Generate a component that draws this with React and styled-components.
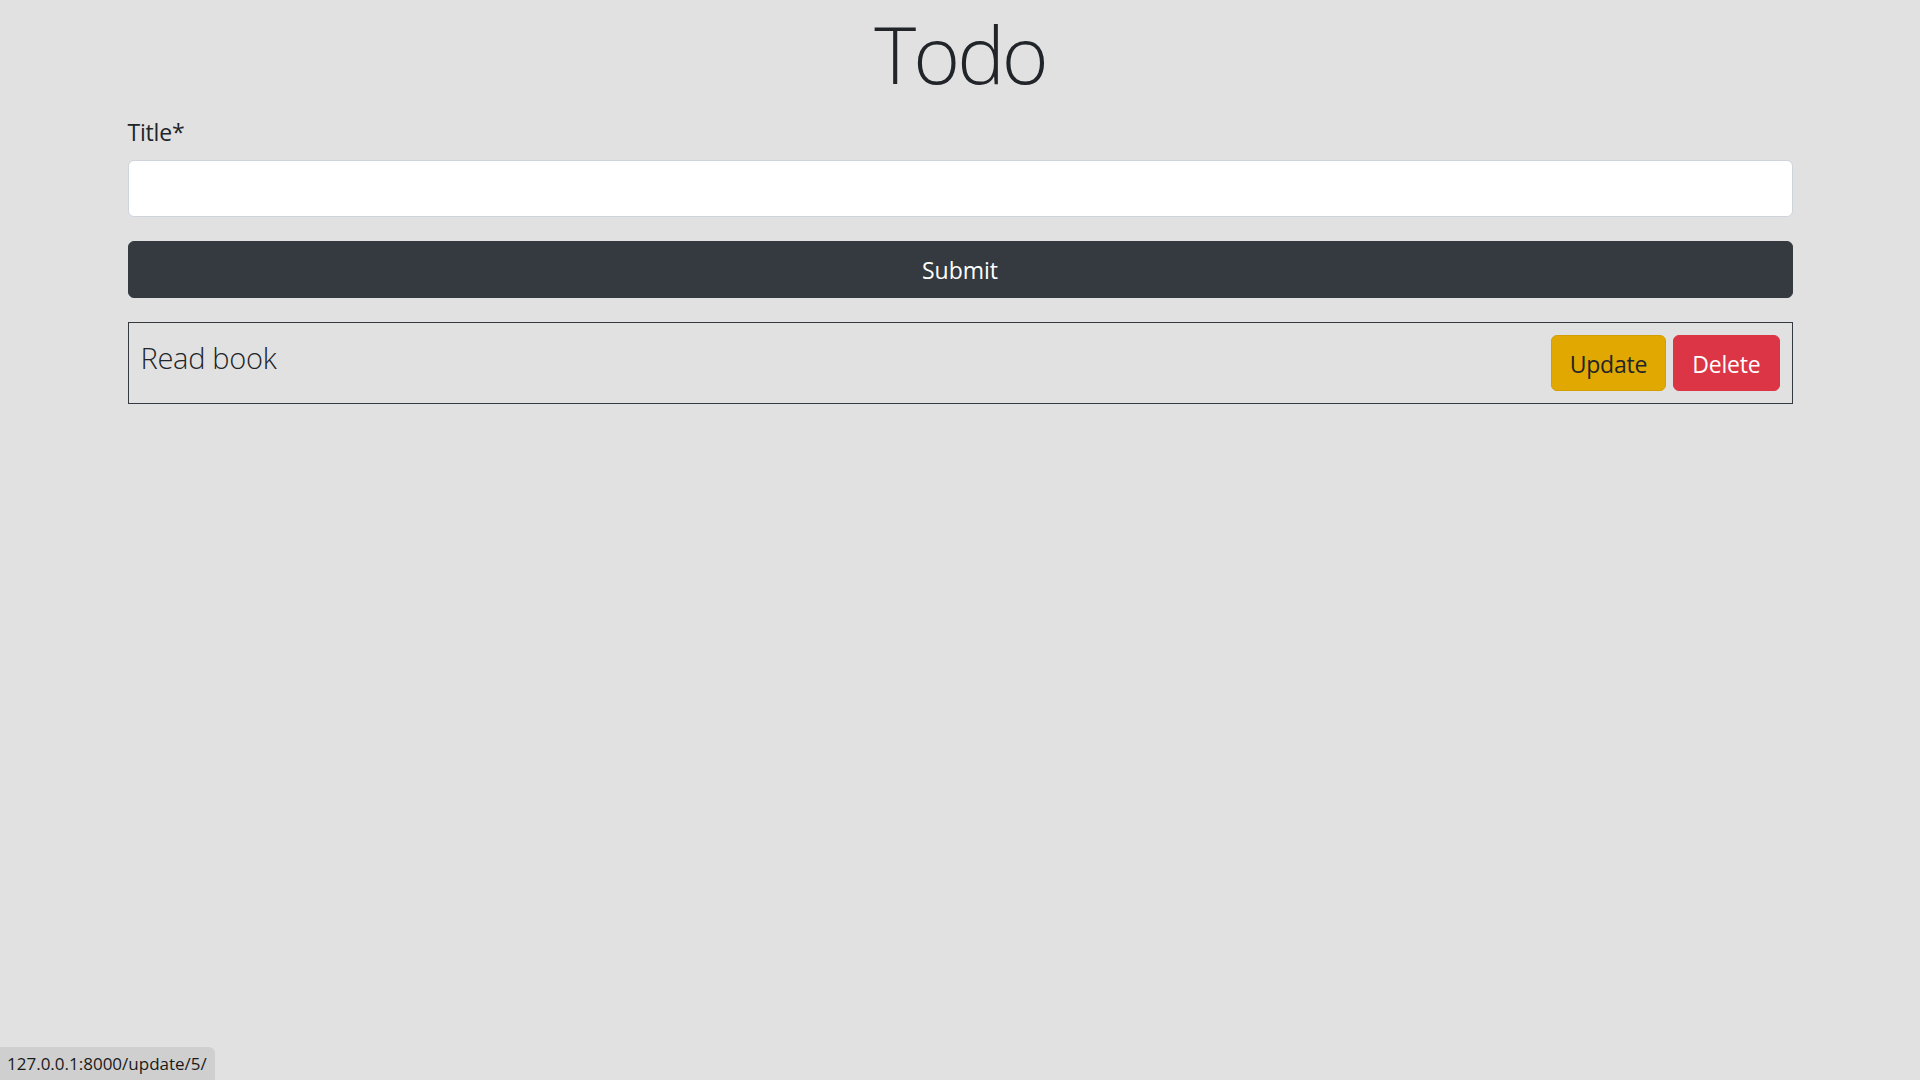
import React, { useState } from 'react';
import styled, { createGlobalStyle } from 'styled-components';

const GlobalStyle = createGlobalStyle`
  html, body {
    margin: 0;
    padding: 0;
    background: #e1e1e1;
  }
  body {
    font-family: "Open Sans", "Noto Sans", "Liberation Sans", sans-serif;
    color: #212529;
    font-size: 24px;
    line-height: 1.5;
  }
  * {
    box-sizing: border-box;
  }
`;

const Page = styled.div`
  min-height: 100vh;
`;

const Container = styled.main`
  width: 1665px;
  margin: 0 auto;
`;

const Heading = styled.h1`
  margin: 0 0 12px;
  padding-top: 4px;
  font-size: 80px;
  font-weight: 300;
  line-height: 98px;
  text-align: center;
  letter-spacing: -3px;
`;

const Form = styled.form`
  display: flex;
  flex-direction: column;
`;

const FormGroup = styled.div`
  display: flex;
  flex-direction: column;
  margin-bottom: 24px;
`;

const Label = styled.label`
  margin-bottom: 10px;
  font-size: 23px;
  line-height: 36px;
  letter-spacing: -0.2px;
`;

const Input = styled.input`
  height: 57px;
  padding: 9px 18px;
  border: 1px solid #ced4da;
  border-radius: 6px;
  background: #fff;
  font: inherit;
  color: #495057;
  outline: none;
`;

const SubmitButton = styled.button`
  height: 57px;
  width: 100%;
  padding-top: 2px;
  border: 1px solid #343a40;
  border-radius: 6px;
  background: #343a40;
  color: #fff;
  font-family: inherit;
  font-size: 23px;
  line-height: 36px;
  cursor: pointer;
`;

const TodoList = styled.ul`
  list-style: none;
  margin: 24px 0 0;
  padding: 0;
`;

const TodoItem = styled.li`
  display: flex;
  justify-content: space-between;
  align-items: flex-start;
  padding: 12px;
  border: 1px solid #343a40;
`;

const TodoText = styled.p`
  margin: 0;
  font-size: 29px;
  font-weight: 300;
  line-height: 45px;
  letter-spacing: -0.3px;
`;

const Actions = styled.div`
  display: flex;
  gap: 7px;
`;

const ActionButton = styled.a`
  display: inline-flex;
  align-items: center;
  justify-content: center;
  height: 56px;
  padding: 2px ${(p) => p.$pad}px 0;
  border-radius: 6px;
  border: 1px solid ${(p) => p.$border};
  background: ${(p) => p.$bg};
  color: ${(p) => p.$color};
  font-size: 23px;
  text-decoration: none;
  letter-spacing: -0.2px;
  cursor: pointer;
`;

const StatusBar = styled.div`
  position: fixed;
  left: 0;
  bottom: 0;
  height: 33px;
  padding: 0 8px 0 7px;
  display: flex;
  align-items: center;
  background: #cfcfcf;
  border-top-right-radius: 6px;
  color: #1a1a1a;
  font-size: 17px;
`;

export default function App() {
  const [title, setTitle] = useState('');
  const [todos] = useState([{ id: 5, title: 'Read book' }]);

  return (
    <Page>
      <GlobalStyle />
      <Container>
        <Heading>Todo</Heading>
        <Form onSubmit={(e) => e.preventDefault()}>
          <FormGroup>
            <Label htmlFor="id_title">Title*</Label>
            <Input
              id="id_title"
              type="text"
              value={title}
              onChange={(e) => setTitle(e.target.value)}
            />
          </FormGroup>
          <SubmitButton type="submit">Submit</SubmitButton>
        </Form>
        <TodoList>
          {todos.map((todo) => (
            <TodoItem key={todo.id}>
              <TodoText>{todo.title}</TodoText>
              <Actions>
                <ActionButton $pad={18} $bg="#e0a800" $border="#d39e00" $color="#212529">
                  Update
                </ActionButton>
                <ActionButton $pad={18} $bg="#dc3545" $border="#dc3545" $color="#fff">
                  Delete
                </ActionButton>
              </Actions>
            </TodoItem>
          ))}
        </TodoList>
      </Container>
      <StatusBar>127.0.0.1:8000/update/5/</StatusBar>
    </Page>
  );
}
